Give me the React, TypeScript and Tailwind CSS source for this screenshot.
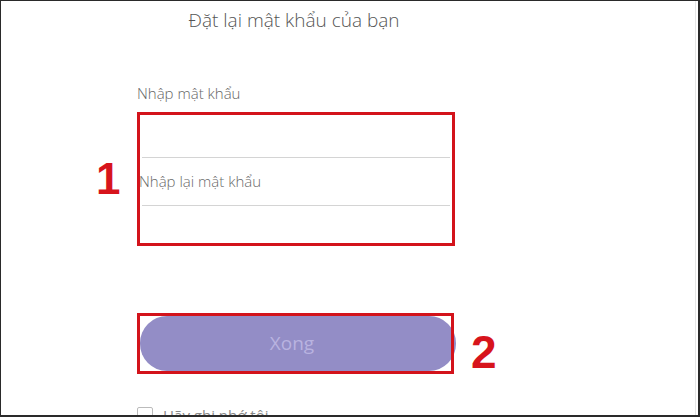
import React from "react";

export default function App() {
  return (
    <div
      className="relative w-[700px] h-[417px] bg-white overflow-hidden border-t border-l border-b-2 border-r-2 border-[#2a2a2a]"
      style={{ fontFamily: '"Open Sans", "Noto Sans", sans-serif' }}
    >
      <div className="absolute right-[2px] top-0 bottom-0 w-px bg-[#e6e6e6]" />
      <div className="flex">
        <div className="w-[95px] shrink-0" />
        <div className="w-[41px] shrink-0 flex flex-col">
          <div className="h-[152px]" />
          <div
            className="text-[44px] leading-[52px] font-bold text-[#d7141c]"
            style={{ fontFamily: '"Liberation Sans", Arial, sans-serif' }}
          >
            1
          </div>
        </div>
        <div className="w-[320px] shrink-0 flex flex-col">
          <div className="pt-[7px] h-[32px] text-center text-[19px] leading-[24px] font-light text-[#555] pr-[6px]">
            Đặt lại mật khẩu của bạn
          </div>
          <div className="h-[50px]" />
          <div className="text-[15px] leading-[20px] text-[#666] font-light">
            Nhập mật khẩu
          </div>
          <div className="h-[9px]" />
          <div className="w-[318px] h-[134px] border-[3px] border-[#d3131b] flex flex-col">
            <div className="h-[43px] mx-[2px] border-b border-[#d4d4d4]" />
            <div className="h-[48px] mx-[2px] border-b border-[#d4d4d4] flex items-center">
              <span className="text-[15px] text-[#6a6a6a] font-light -ml-[3px]">Nhập lại mật khẩu</span>
            </div>
          </div>
          <div className="h-[67px]" />
          <div className="relative w-[317px] h-[61px]">
            <div className="absolute left-[3px] -right-[2px] top-[3px] bottom-[3px] rounded-[27px] bg-[#938dc6] flex items-center justify-center">
              <span className="text-[19px] text-[#b9b3e0] pr-[12px]">Xong</span>
            </div>
            <div className="absolute inset-0 border-[3px] border-[#d3131b] pointer-events-none" />
          </div>
          <div className="h-[30px]" />
          <div className="flex items-center gap-[10px]">
            <div className="w-[16px] h-[16px] border border-[#bbb] rounded-[2px] shrink-0" />
            <span className="text-[15px] text-[#888]">Hãy ghi nhớ tôi</span>
          </div>
        </div>
        <div className="flex flex-col pl-[14px]">
          <div className="h-[326px]" />
          <div
            className="text-[46px] leading-[50px] font-bold text-[#d7141c]"
            style={{ fontFamily: '"Liberation Sans", Arial, sans-serif' }}
          >
            2
          </div>
        </div>
      </div>
    </div>
  );
}
